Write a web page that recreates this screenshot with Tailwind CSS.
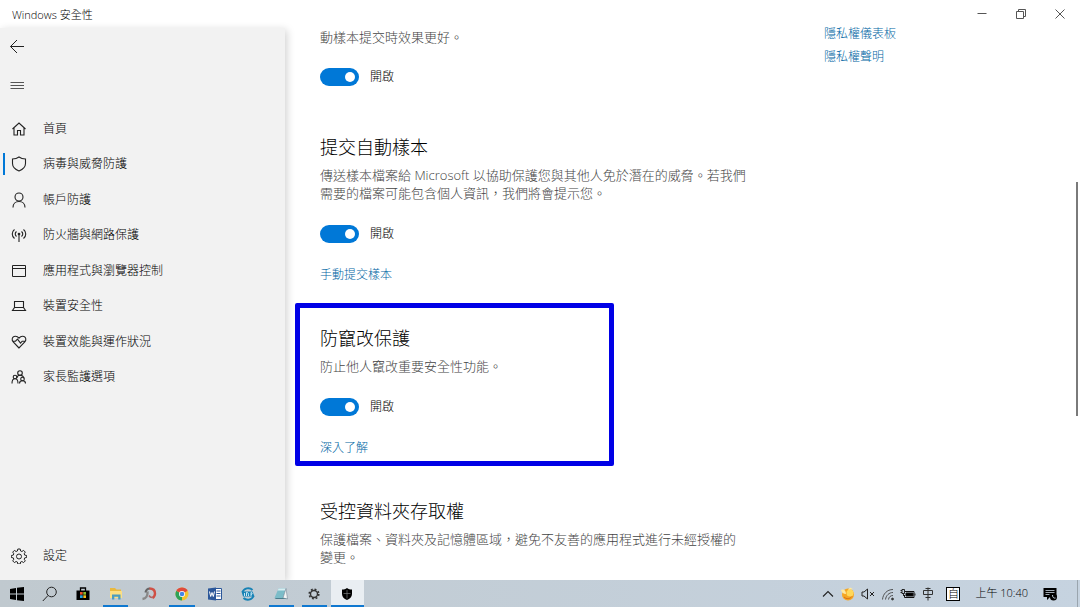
<!DOCTYPE html>
<html lang="zh-Hant-TW">
<head>
    <meta charset="UTF-8">
    <meta name="viewport" content="width=device-width, initial-scale=1.0">
    <title>Windows 安全性</title>
    <script src="https://cdn.jsdelivr.net/npm/@tailwindcss/browser@4"></script>
</head>
<body class="h-screen flex flex-col overflow-hidden bg-white text-black text-[12px] font-light font-['Open_Sans','Noto_Sans_CJK_TC',sans-serif]">

    <!-- Title bar -->
    <header class="h-7 shrink-0 flex items-center justify-between">
        <h1 class="pl-3 pt-[2px] text-[11px] text-black">Windows 安全性</h1>
        <div class="flex h-full pr-px">
            <button aria-label="最小化" class="w-[39px] flex items-center justify-center">
                <svg class="w-3 h-3" viewBox="0 0 12 12" fill="none" stroke="#555"><path d="M1.500 5.500h9"/></svg>
            </button>
            <button aria-label="還原" class="w-[39px] flex items-center justify-center">
                <svg class="w-3 h-3" viewBox="0 0 12 12" fill="none" stroke="#555"><path d="M1.500 3.500h7v7h-7zM3.500 3.500v-2h7v7h-2"/></svg>
            </button>
            <button aria-label="關閉" class="w-[39px] flex items-center justify-center">
                <svg class="w-3 h-3" viewBox="0 0 12 12" fill="none" stroke="#555"><path d="M1.500 1.500l9 9M10.500 1.500l-9 9"/></svg>
            </button>
        </div>
    </header>

    <div class="flex-1 min-h-0 flex">
        <!-- Sidebar -->
        <aside class="w-[285px] shrink-0 flex flex-col bg-[#f2f2f2] shadow-[2px_2px_8px_rgba(0,0,0,0.18)]">
            <button aria-label="上一頁" class="h-9 w-11 pl-[9px] flex items-center">
                <svg class="w-4 h-4" viewBox="0 0 16 16" fill="none" stroke="#222"><path d="M15 8.500H1.500M8 2L1.500 8.500l6.500 6.500"/></svg>
            </button>
            <button aria-label="選單" class="h-[42px] w-11 pl-[9px] flex items-center">
                <svg class="w-4 h-4" viewBox="0 0 16 16" fill="none" stroke="#555"><path d="M1.500 5.500h13.500M1.500 8.500h13.500M1.500 11.500h13.500"/></svg>
            </button>
            <nav class="mt-[5px] h-[284px] flex flex-col">
                <a href="#" class="flex-1 flex items-center">
                    <span class="ml-[3px] w-[2px] h-[22px]"></span>
                    <svg class="ml-[6px] mr-4 w-4 h-4" viewBox="0 0 16 16" fill="none" stroke="#222" stroke-width="1.100"><path d="M1.500 8L8 2l6.500 6M3 7v7h3.500V9.500h3V14H13V7"/></svg>
                    首頁
                </a>
                <a href="#" aria-current="page" class="flex-1 flex items-center">
                    <span class="ml-[3px] w-[2px] h-[22px] bg-[#0078d7]"></span>
                    <svg class="ml-[6px] mr-4 w-4 h-4" viewBox="0 0 16 16" fill="none" stroke="#222" stroke-width="1.100"><path d="M8 1C6 2.500 4 3 1.500 3v4.500c0 3.500 3 6 6.500 7.500 3.500-1.500 6.500-4 6.500-7.500V3C12 3 10 2.500 8 1z"/></svg>
                    病毒與威脅防護
                </a>
                <a href="#" class="flex-1 flex items-center">
                    <span class="ml-[3px] w-[2px] h-[22px]"></span>
                    <svg class="ml-[6px] mr-4 w-4 h-4" viewBox="0 0 16 16" fill="none" stroke="#222" stroke-width="1.100"><circle cx="8" cy="5" r="4"/><path d="M2 15.500c0-3.500 2.500-6 6-6s6 2.500 6 6"/></svg>
                    帳戶防護
                </a>
                <a href="#" class="flex-1 flex items-center">
                    <span class="ml-[3px] w-[2px] h-[22px]"></span>
                    <svg class="ml-[6px] mr-4 w-4 h-4" viewBox="0 0 16 16" fill="none" stroke="#222" stroke-width="1.100"><path d="M8 7v8M3.500 2.500C.500 5 .500 9 3.500 11.500M12.500 2.500c3 2.500 3 6.500 0 9M5.500 4.500c-1.700 1.500-1.700 3.500 0 5M10.500 4.500c1.700 1.500 1.700 3.500 0 5"/><circle cx="8" cy="7" r=".8" fill="#222"/></svg>
                    防火牆與網路保護
                </a>
                <a href="#" class="flex-1 flex items-center">
                    <span class="ml-[3px] w-[2px] h-[22px]"></span>
                    <svg class="ml-[6px] mr-4 w-4 h-4" viewBox="0 0 16 16" fill="none" stroke="#222"><path d="M1.500 2.500h13v11h-13zM1.500 5.500h13"/></svg>
                    應用程式與瀏覽器控制
                </a>
                <a href="#" class="flex-1 flex items-center">
                    <span class="ml-[3px] w-[2px] h-[22px]"></span>
                    <svg class="ml-[6px] mr-4 w-4 h-4" viewBox="0 0 16 16" fill="none" stroke="#222" stroke-width="1.100"><path d="M3.500 9.500v-6h9v6M3.500 9.500h9l2 3h-13z"/></svg>
                    裝置安全性
                </a>
                <a href="#" class="flex-1 flex items-center">
                    <span class="ml-[3px] w-[2px] h-[22px]"></span>
                    <svg class="ml-[6px] mr-4 w-4 h-4" viewBox="0 0 16 16" fill="none" stroke="#222" stroke-width="1.100"><path d="M8 14L2.200 8C.500 6 1 3.200 3 2.500c2-.700 3.700 0 5 1.700 1.300-1.700 3-2.400 5-1.700s2.500 3.500.800 5.500zM1.500 7.200h3l2-2 3 4 1.700-2h3.300"/></svg>
                    裝置效能與運作狀況
                </a>
                <a href="#" class="flex-1 flex items-center">
                    <span class="ml-[3px] w-[2px] h-[22px]"></span>
                    <svg class="ml-[6px] mr-4 w-4 h-4" viewBox="0 0 16 16" fill="none" stroke="#222" stroke-width="1.100"><circle cx="9" cy="4" r="2.300"/><circle cx="4" cy="8" r="1.800"/><circle cx="11.500" cy="10" r="1.800"/><path d="M1 14.500c0-3 1.200-4.700 3-4.700s3 1.700 3 4.700M8.500 14.500c0-1.800 1.200-2.700 3-2.700s3 .9 3 2.700M5.800 9C6.200 7.300 7.300 6.300 9 6.300c2 0 3.500 1 4 3"/></svg>
                    家長監護選項
                </a>
            </nav>
            <a href="#" class="mt-auto mb-[6px] h-9 flex items-center">
                <svg class="ml-[11px] mr-4 w-4 h-4" viewBox="0 0 16 16" fill="none" stroke="#222"><path d="M6.800 1h2.400l.4 2 1.300.5 1.700-1.100 1.700 1.700-1.100 1.700.5 1.300 2 .4v2l-2 .4-.5 1.300 1.100 1.700-1.700 1.700-1.700-1.100-1.300.5-.4 2H6.800l-.4-2-1.300-.5-1.700 1.100-1.700-1.700 1.100-1.700L2.300 9.900l-2-.4v-2l2-.4.5-1.300-1.100-1.700 1.700-1.700 1.700 1.100L6.400 3z"/><circle cx="8" cy="8.500" r="2.500"/></svg>
                設定
            </a>
        </aside>

        <!-- Settings -->
        <main class="flex-1 min-w-0 flex pl-[35px]">
            <div class="w-[504px] text-[13px] leading-[18px] text-[#444]">
                <section>
                    <p>動樣本提交時效果更好。</p>
                    <label class="mt-[21px] h-5 flex items-center gap-[11px] text-[12px] text-black">
                        <input type="checkbox" checked class="appearance-none w-[39px] h-[18px] px-1 rounded-full bg-[#0078d7] flex items-center justify-end before:content-[''] before:w-[10px] before:h-[10px] before:rounded-full before:bg-white">
                        開啟
                    </label>
                </section>

                <section class="mt-12">
                    <h2 class="text-[18px] leading-6 text-black">提交自動樣本</h2>
                    <p class="mt-[7px]">傳送樣本檔案給 Microsoft 以協助保護您與其他人免於潛在的威脅。若我們<br>需要的檔案可能包含個人資訊，我們將會提示您。</p>
                    <label class="mt-[22px] h-5 flex items-center gap-[11px] text-[12px] text-black">
                        <input type="checkbox" checked class="appearance-none w-[39px] h-[18px] px-1 rounded-full bg-[#0078d7] flex items-center justify-end before:content-[''] before:w-[10px] before:h-[10px] before:rounded-full before:bg-white">
                        開啟
                    </label>
                    <a href="#" class="mt-[22px] block w-fit text-[12px] leading-[18px] text-[#0066a4]">手動提交樣本</a>
                </section>

                <section class="mt-[42px] relative">
                    <div class="absolute -left-[25px] -top-[23px] -bottom-[9px] w-[319px] rounded-xs border-5 border-[#0000e6] pointer-events-none"></div>
                    <h2 class="text-[18px] leading-6 text-black">防竄改保護</h2>
                    <p class="mt-[7px]">防止他人竄改重要安全性功能。</p>
                    <label class="mt-[22px] h-5 flex items-center gap-[11px] text-[12px] text-black">
                        <input type="checkbox" checked class="appearance-none w-[39px] h-[18px] px-1 rounded-full bg-[#0078d7] flex items-center justify-end before:content-[''] before:w-[10px] before:h-[10px] before:rounded-full before:bg-white">
                        開啟
                    </label>
                    <a href="#" class="mt-[22px] block w-fit text-[12px] leading-[18px] text-[#0066a4]">深入了解</a>
                </section>

                <section class="mt-[42px]">
                    <h2 class="text-[18px] leading-6 text-black">受控資料夾存取權</h2>
                    <p class="mt-[7px]">保護檔案、資料夾及記憶體區域，避免不友善的應用程式進行未經授權的<br>變更。</p>
                </section>
            </div>

            <div class="flex flex-col gap-[11px] leading-3 text-[12px] text-[#0066a4]">
                <a href="#">隱私權儀表板</a>
                <a href="#">隱私權聲明</a>
            </div>

            <!-- Scroll thumb -->
            <div class="ml-auto mr-[2px] mt-[154px] w-[2px] h-[234px] bg-[#7a7a7a]"></div>
        </main>
    </div>

    <!-- Taskbar -->
    <footer class="h-[27px] shrink-0 flex justify-between bg-linear-to-r from-[#c0c9cf] to-[#c6d3e0]">
        <div class="w-[364px] flex">
            <button aria-label="開始" class="flex-1 flex items-center justify-center">
                <svg class="w-4 h-4" viewBox="0 0 16 16" fill="#000"><path d="M1 3l6-1v5.500H1zM8 1.800L15 1v6.500H8zM1 8.500h6V14l-6-1zM8 8.500h7V15l-7-.8z"/></svg>
            </button>
            <button aria-label="搜尋" class="flex-1 flex items-center justify-center">
                <svg class="w-4 h-4" viewBox="0 0 16 16" fill="none" stroke="#222"><circle cx="9.500" cy="6" r="4.800"/><path d="M6 9.500L.8 15"/></svg>
            </button>
            <button aria-label="Microsoft Store" class="flex-1 flex items-center justify-center">
                <svg class="w-4 h-4" viewBox="0 0 16 16"><path d="M5.500 5V2h5v3" fill="none" stroke="#000" stroke-width="1.300"/><path d="M1.500 4.500h13V14h-13z"/><path d="M5 6h2.700v2.700H5z" fill="#e8502a"/><path d="M8.300 6H11v2.700H8.300z" fill="#8bb929"/><path d="M5 9.300h2.700V12H5z" fill="#27a5dd"/><path d="M8.300 9.300H11V12H8.300z" fill="#f6bb1c"/></svg>
            </button>
            <button aria-label="檔案總管" class="flex-1 flex items-center justify-center relative after:absolute after:inset-x-1 after:bottom-0 after:h-[2px] after:bg-[#0f78d0]">
                <svg class="w-4 h-4" viewBox="0 0 16 16"><path d="M2 2h5l1.500 1.500H13V12H2z" fill="#e9b93f"/><path d="M2 5h12v7H2z" fill="#fbdf83"/><path d="M4 13.500V8.500h8.500v5h-2.300v-2.700H6.300v2.700z" fill="#4a9cc0"/></svg>
            </button>
            <button aria-label="媒體工具" class="flex-1 flex items-center justify-center">
                <svg class="w-4 h-4" viewBox="0 0 16 16" fill="none"><path d="M4.500 6.500C5 4 7 2.500 9 2.500" stroke="#666" stroke-width="2.200"/><path d="M8.500 2.500c3.500 0 5.500 2 5.500 5 0 2-1 3.500-2.500 4.500" stroke="#d05045" stroke-width="2.400"/><path d="M6.500 5.500c.5 4-1.500 7-5 7.500" stroke="#888" stroke-width="2.400"/><path d="M8 9.500c.8 1.500 2 2.200 3.500 2" stroke="#a66" stroke-width="1.600"/></svg>
            </button>
            <button aria-label="Chrome" class="flex-1 flex items-center justify-center relative after:absolute after:inset-x-1 after:bottom-0 after:h-[2px] after:bg-[#0f78d0]">
                <svg class="w-4 h-4" viewBox="0 0 16 16"><circle cx="8" cy="8" r="6.500" fill="#f4c430"/><path d="M8 8L2.400 4.700A6.500 6.500 0 008 14.500z" fill="#2ea258"/><path d="M8 8L2.400 4.700A6.500 6.500 0 0113.600 4.700z" fill="#df4a3c"/><circle cx="8" cy="8" r="3" fill="#fff"/><circle cx="8" cy="8" r="2.300" fill="#4486e8"/></svg>
            </button>
            <button aria-label="Word" class="flex-1 flex items-center justify-center">
                <svg class="w-4 h-4" viewBox="0 0 16 16"><path d="M8 2.500h6.500v11H8z" fill="#fff" stroke="#2b579a"/><path d="M9.500 5h4M9.500 7.500h4M9.500 10h4" stroke="#2b579a"/><path d="M1 2.500L9 1.500v13l-8-1z" fill="#2b579a"/><path d="M2.500 5.500l1.200 5L5 6.500l1.300 4 1.200-5" fill="none" stroke="#fff"/></svg>
            </button>
            <button aria-label="同步工具" class="flex-1 flex items-center justify-center">
                <svg class="w-4 h-4" viewBox="0 0 16 16" fill="none"><path d="M2.500 6C4 2 9.500 1 12.500 4M13.500 10c-1.500 4-7 5-10 2" stroke="#1782b5" stroke-width="2"/><path d="M1.500 5.500h11l2 5H3z" fill="#1782b5"/><path d="M4.500 10V7M6.500 10V6.500c2 0 2 1 2 3.500M11 10V6.500c1.500 0 1.500 2 0 2" stroke="#d8f0fa" stroke-width=".9"/></svg>
            </button>
            <button aria-label="記事本" class="flex-1 flex items-center justify-center relative after:absolute after:inset-x-1 after:bottom-0 after:h-[2px] after:bg-[#0f78d0]">
                <svg class="w-4 h-4" viewBox="0 0 16 16"><path d="M5.500 2.500H13l-3 9.500H1.500z" fill="#7cbcc8"/><path d="M5.500 2.500H13l-.7 2H4.700z" fill="#d6eef2"/><path d="M13 2.500l1.500 10.500-4.500-1z" fill="#f2f5f5" stroke="#678" stroke-width=".5"/><path d="M1.500 12H10l4.500 1H3z" fill="#4a7d8c"/></svg>
            </button>
            <button aria-label="設定" class="flex-1 flex items-center justify-center relative after:absolute after:inset-x-1 after:bottom-0 after:h-[2px] after:bg-[#0f78d0]">
                <svg class="w-4 h-4" viewBox="0 0 16 16" fill="none" stroke="#333"><circle cx="8" cy="8" r="3.500" stroke-width="1.400"/><circle cx="8" cy="8" r="4.800" stroke-width="1.600" stroke-dasharray="1.900 1.870"/></svg>
            </button>
            <button aria-label="Windows 安全性" class="flex-1 flex items-center justify-center bg-[#e9eef2] relative after:absolute after:inset-x-0 after:bottom-0 after:h-[2px] after:bg-[#0f78d0]">
                <svg class="w-4 h-4" viewBox="0 0 16 16"><path d="M8 2C6.500 3 5 3.500 3 3.500V8c0 3 2.200 4.800 5 6 2.800-1.200 5-3 5-6V3.500c-2 0-3.500-.5-5-1.500z"/><path d="M8 4v8.500M4.500 7.500h7" stroke="#8a8e92" stroke-width=".6"/></svg>
            </button>
        </div>

        <!-- Tray -->
        <div class="flex items-center">
            <div class="flex items-center gap-1 mr-[10px]">
                <svg class="w-4 h-4" viewBox="0 0 16 16" fill="none" stroke="#222" stroke-width="1.100"><path d="M3 10.500l5-5 5 5"/></svg>
                <svg class="w-4 h-4" viewBox="0 0 16 16"><circle cx="8" cy="8.500" r="6" fill="#f5a623"/><circle cx="10" cy="7" r="3.500" fill="#ffd85a"/><path d="M1 4c3-1.500 5 1 5 4C3.500 8 1.500 6.500 1 4zM8 4l2-2.500 3 1.500z" fill="#ffe9a0"/><path d="M4 11c2.500 2.500 6 2 8-.5" fill="none" stroke="#d8701a"/></svg>
                <svg class="w-4 h-4" viewBox="0 0 16 16" fill="none" stroke="#222"><path d="M2 6h2l3.500-3v10L4 10H2zM10 6l4 4M14 6l-4 4"/></svg>
                <svg class="w-4 h-4" viewBox="0 0 16 16" fill="none" stroke="#444" stroke-width=".9"><path d="M2.500 13.500C3 8 7 3.500 13 3.500M5.500 13.500c.5-4 3.500-7 7.500-7M8.500 13.500c.3-2.500 2-4 4.500-4"/><circle cx="12.500" cy="13" r="1" fill="#222"/></svg>
                <svg class="w-4 h-4" viewBox="0 0 16 16" fill="none" stroke="#111"><path d="M5 5.500h9v6H4.500V9"/><path d="M6 7h7v3H6z" fill="#000"/><path d="M15 7.500v2M.5 4.500H2M.5 6.500H2M2 3.500h2.500v4H2zM3.500 7.500V10" stroke-width=".9"/></svg>
                <svg class="w-4 h-4" viewBox="0 0 16 16" fill="none" stroke="#333"><path d="M3.500 4.500h9v4h-9zM8 1.500v13M5.500 2.500h5M5.500 11.500h5"/></svg>
            </div>
            <span class="w-[14px] h-[14px] mr-[15px] flex items-center justify-center border border-black bg-white text-[11px] leading-none">自</span>
            <time class="mr-[14px] text-[11px]">上午 10:40</time>
            <button aria-label="通知" class="mr-[19px]">
                <svg class="w-4 h-4 block" viewBox="0 0 16 16"><path d="M1.500 2h13v9H8l-3 3v-3H1.500z"/><path d="M3.500 4.500h9M3.500 6.500h9M3.500 8.500h4" stroke="#c6d3e0" stroke-width=".8"/><circle cx="11.500" cy="11" r="3.500"/><path d="M10.500 9c0 2.500 1.500 3.500 3 3" fill="none" stroke="#c6d3e0"/></svg>
            </button>
            <span class="h-full w-[3px] border-l border-[#9aa5ae]"></span>
        </div>
    </footer>
</body>
</html>
